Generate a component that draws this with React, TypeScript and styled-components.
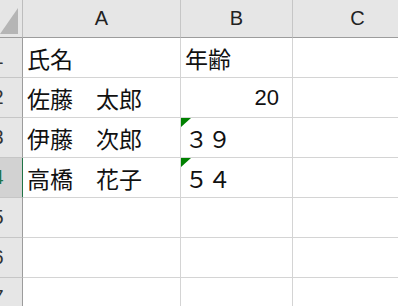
import {Fragment} from "react";
import styled, {createGlobalStyle} from "styled-components";

const GlobalStyle = createGlobalStyle`
    html, body {
        margin: 0;
        padding: 0;
        background: #ffffff;
        overflow: hidden;
    }
`;

const Sheet = styled.div`
    display: grid;
    grid-template-columns: 23px 158px 112px 130px;
    grid-auto-rows: 40px;
    grid-template-rows: 38px;
    width: 398px;
    height: 306px;
    overflow: hidden;
    font-family: "Liberation Sans", "Noto Sans CJK JP", sans-serif;
    color: #111;
`;

const Corner = styled.div`
    position: relative;
    background: #e6e6e6;
    border-right: 1px solid #bdbdbd;
    border-bottom: 1px solid #9c9c9c;

    // little grey triangle for "select all"
    &::after {
        content: "";
        position: absolute;
        right: 4px;
        bottom: 3px;
        width: 18px;
        height: 26px;
        background: #b5b5b5;
        clip-path: polygon(100% 0, 100% 100%, 0 100%);
    }
`;

const ColHeader = styled.div`
    display: flex;
    align-items: center;
    justify-content: center;
    background: #e6e6e6;
    border-right: 1px solid #c6c6c6;
    border-bottom: 1px solid #9c9c9c;
    font-size: 20px;
    color: #222;
`;

const RowHeader = styled.div<{ $active?: boolean }>`
    display: flex;
    align-items: center;
    justify-content: flex-end;
    overflow: hidden;
    background: ${(p) => (p.$active ? "#d2d2d2" : "#e6e6e6")};
    border-bottom: 1px solid #c6c6c6;
    border-right: ${(p) => (p.$active ? "2px solid #217346" : "1px solid #9c9c9c")};
    margin-right: ${(p) => (p.$active ? "-1px" : "0")};
    font-size: 20px;
    color: ${(p) => (p.$active ? "#217346" : "#333")};
`;

const RowNumber = styled.span`
    flex: 0 0 48px;
    text-align: center;
`;

const Cell = styled.div<{ $align?: "left" | "right" }>`
    position: relative;
    display: flex;
    align-items: center;
    justify-content: ${(p) => (p.$align === "right" ? "flex-end" : "flex-start")};
    padding: 0 ${(p) => (p.$align === "right" ? "13px" : "4px")} 0 4px;
    border-right: 1px solid #d4d4d4;
    border-bottom: 1px solid #d4d4d4;
    font-size: 23px;
    white-space: pre;
    background: #fff;
`;

const Latin = styled.span`
    font-size: 22px;
`;

// green "number stored as text" marker
const ErrorMark = styled.span`
    position: absolute;
    top: 0;
    left: 0;
    width: 10px;
    height: 9px;
    background: #008000;
    clip-path: polygon(0 0, 100% 0, 0 100%);
`;

type Row = { a: string; b: string; bAlign?: "left" | "right"; textNumber?: boolean };

const rows: Row[] = [
    {a: "氏名", b: "年齢"},
    {a: "佐藤　太郎", b: "20", bAlign: "right"},
    {a: "伊藤　次郎", b: "３９", textNumber: true},
    {a: "高橋　花子", b: "５４", textNumber: true},
    {a: "", b: ""},
    {a: "", b: ""},
    {a: "", b: ""},
];

export default function App() {
    return (
        <>
            <GlobalStyle/>
            <Sheet>
                <Corner/>
                <ColHeader>A</ColHeader>
                <ColHeader>B</ColHeader>
                <ColHeader>C</ColHeader>
                {rows.map((row, i) => (
                    <Fragment key={i}>
                        <RowHeader $active={i === 3}>
                            <RowNumber>{i + 1}</RowNumber>
                        </RowHeader>
                        <Cell>{row.a}</Cell>
                        <Cell $align={row.bAlign}>
                            {row.textNumber && <ErrorMark/>}
                            {row.bAlign === "right" ? <Latin>{row.b}</Latin> : row.b}
                        </Cell>
                        <Cell/>
                    </Fragment>
                ))}
            </Sheet>
        </>
    );
}
